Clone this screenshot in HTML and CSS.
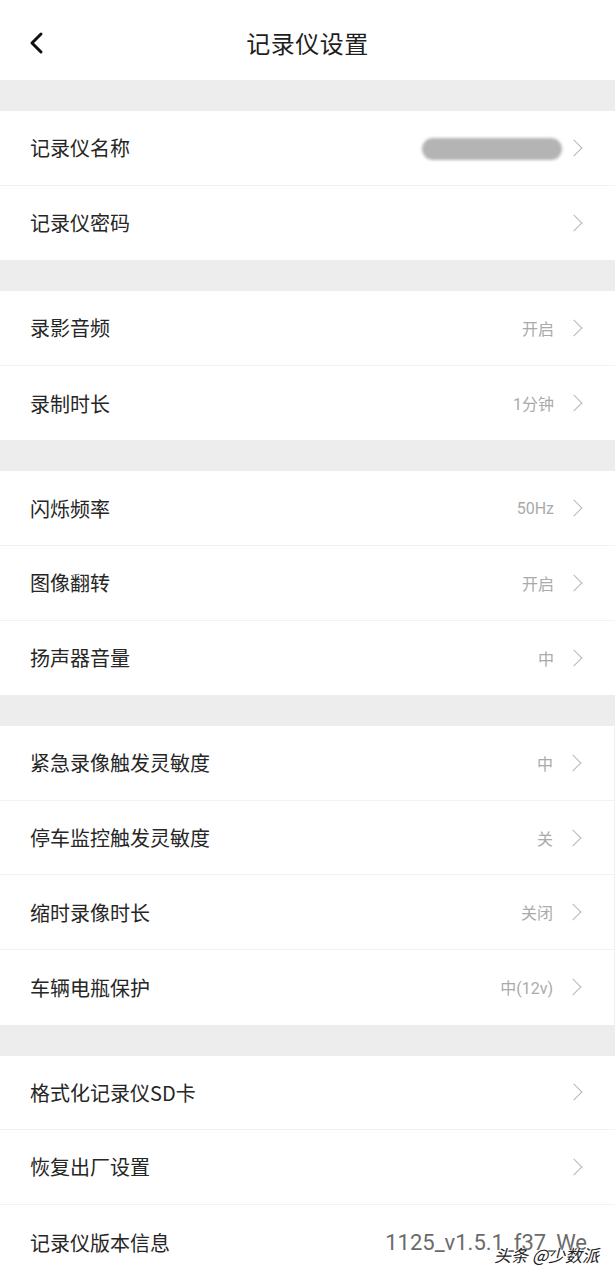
FILE: index.html
```html
<!DOCTYPE html>
<html>
<head>
<meta charset="UTF-8">
<title>记录仪设置</title>
<link rel="stylesheet" href="styles.css">
</head>
<body>
<div class="page">
	<div class="header">
		<a class="back" href="javascript:;">
			<svg width="20" height="24" viewBox="0 0 20 24"><path d="M14 3 L5 12 L14 21" fill="none" stroke="#111" stroke-width="3" stroke-linecap="round" stroke-linejoin="round"/></svg>
		</a>
		<h1>记录仪设置</h1>
	</div>

	<div class="gap"></div>
	<ul class="group">
		<li><span class="label">记录仪名称</span><span class="blur"></span><i class="arrow"></i></li>
		<li><span class="label">记录仪密码</span><i class="arrow"></i></li>
	</ul>

	<div class="gap"></div>
	<ul class="group">
		<li><span class="label">录影音频</span><span class="value">开启</span><i class="arrow"></i></li>
		<li><span class="label">录制时长</span><span class="value">1分钟</span><i class="arrow"></i></li>
	</ul>

	<div class="gap"></div>
	<ul class="group">
		<li><span class="label">闪烁频率</span><span class="value">50Hz</span><i class="arrow"></i></li>
		<li><span class="label">图像翻转</span><span class="value">开启</span><i class="arrow"></i></li>
		<li><span class="label">扬声器音量</span><span class="value">中</span><i class="arrow"></i></li>
	</ul>

	<div class="gap"></div>
	<ul class="group scroll">
		<li><span class="label">紧急录像触发灵敏度</span><span class="value">中</span><i class="arrow"></i></li>
		<li><span class="label">停车监控触发灵敏度</span><span class="value">关</span><i class="arrow"></i></li>
		<li><span class="label">缩时录像时长</span><span class="value">关闭</span><i class="arrow"></i></li>
		<li><span class="label">车辆电瓶保护</span><span class="value">中(12v)</span><i class="arrow"></i></li>
	</ul>

	<div class="gap"></div>
	<ul class="group">
		<li><span class="label">格式化记录仪SD卡</span><i class="arrow"></i></li>
		<li><span class="label">恢复出厂设置</span><i class="arrow"></i></li>
		<li class="version"><span class="label">记录仪版本信息</span><span class="ver">1125_v1.5.1_f37_We</span></li>
	</ul>

	<div class="mark">头条 @少数派</div>
</div>
</body>
</html>
```
FILE: styles.css
```css
* { margin:0; padding:0; box-sizing:border-box; }
li { list-style:none; }
body { background:#fff; font-family:"Noto Sans CJK SC", "Noto Sans", sans-serif; color:#222; }

.page { width:615px; height:1280px; overflow:hidden; position:relative; }

.header { height:80px; display:flex; align-items:center; justify-content:center; position:relative; }
.header h1 { font-size:24px; font-weight:normal; color:#1e1e1e; letter-spacing:0.5px; margin-top:4px; }
.back { position:absolute; left:27px; top:31px; display:block; width:20px; height:24px; }

.gap { height:31px; background:#ededed; }

.group li { height:74.6px; display:flex; align-items:center; padding:0 32px 0 30px; border-bottom:1px solid #f2f2f2; }
.group li:last-child { border-bottom:none; }
.label { flex:1; font-size:20px; color:#262626; }
.value { font-size:16px; color:#aaa; margin-right:14px; font-family:"Roboto", "Noto Sans CJK SC", sans-serif; }
.arrow { width:12px; height:12px; border-top:1.5px solid #b8b8b8; border-right:1.5px solid #b8b8b8; transform:rotate(45deg); margin-right:3px; }

.blur { width:140px; height:22px; border-radius:11px; background:#b4b4b4; filter:blur(1.5px); margin-right:6px; margin-top:2px; }

.scroll { border-right:1px solid #f0f0f0; }

.version { padding-right:30px !important; overflow:hidden; }
.version .label { flex:none; }
.ver { flex:1; text-align:right; white-space:nowrap; font-family:"Roboto", sans-serif; font-size:22px; color:#6a6a6a; margin-right:-2px; }

.mark { position:absolute; right:16px; bottom:13px; font-size:17px; color:#222; font-style:italic;
	text-shadow:0 0 2px #fff, 0 0 2px #fff, 1px 1px 1px #fff; }
```
